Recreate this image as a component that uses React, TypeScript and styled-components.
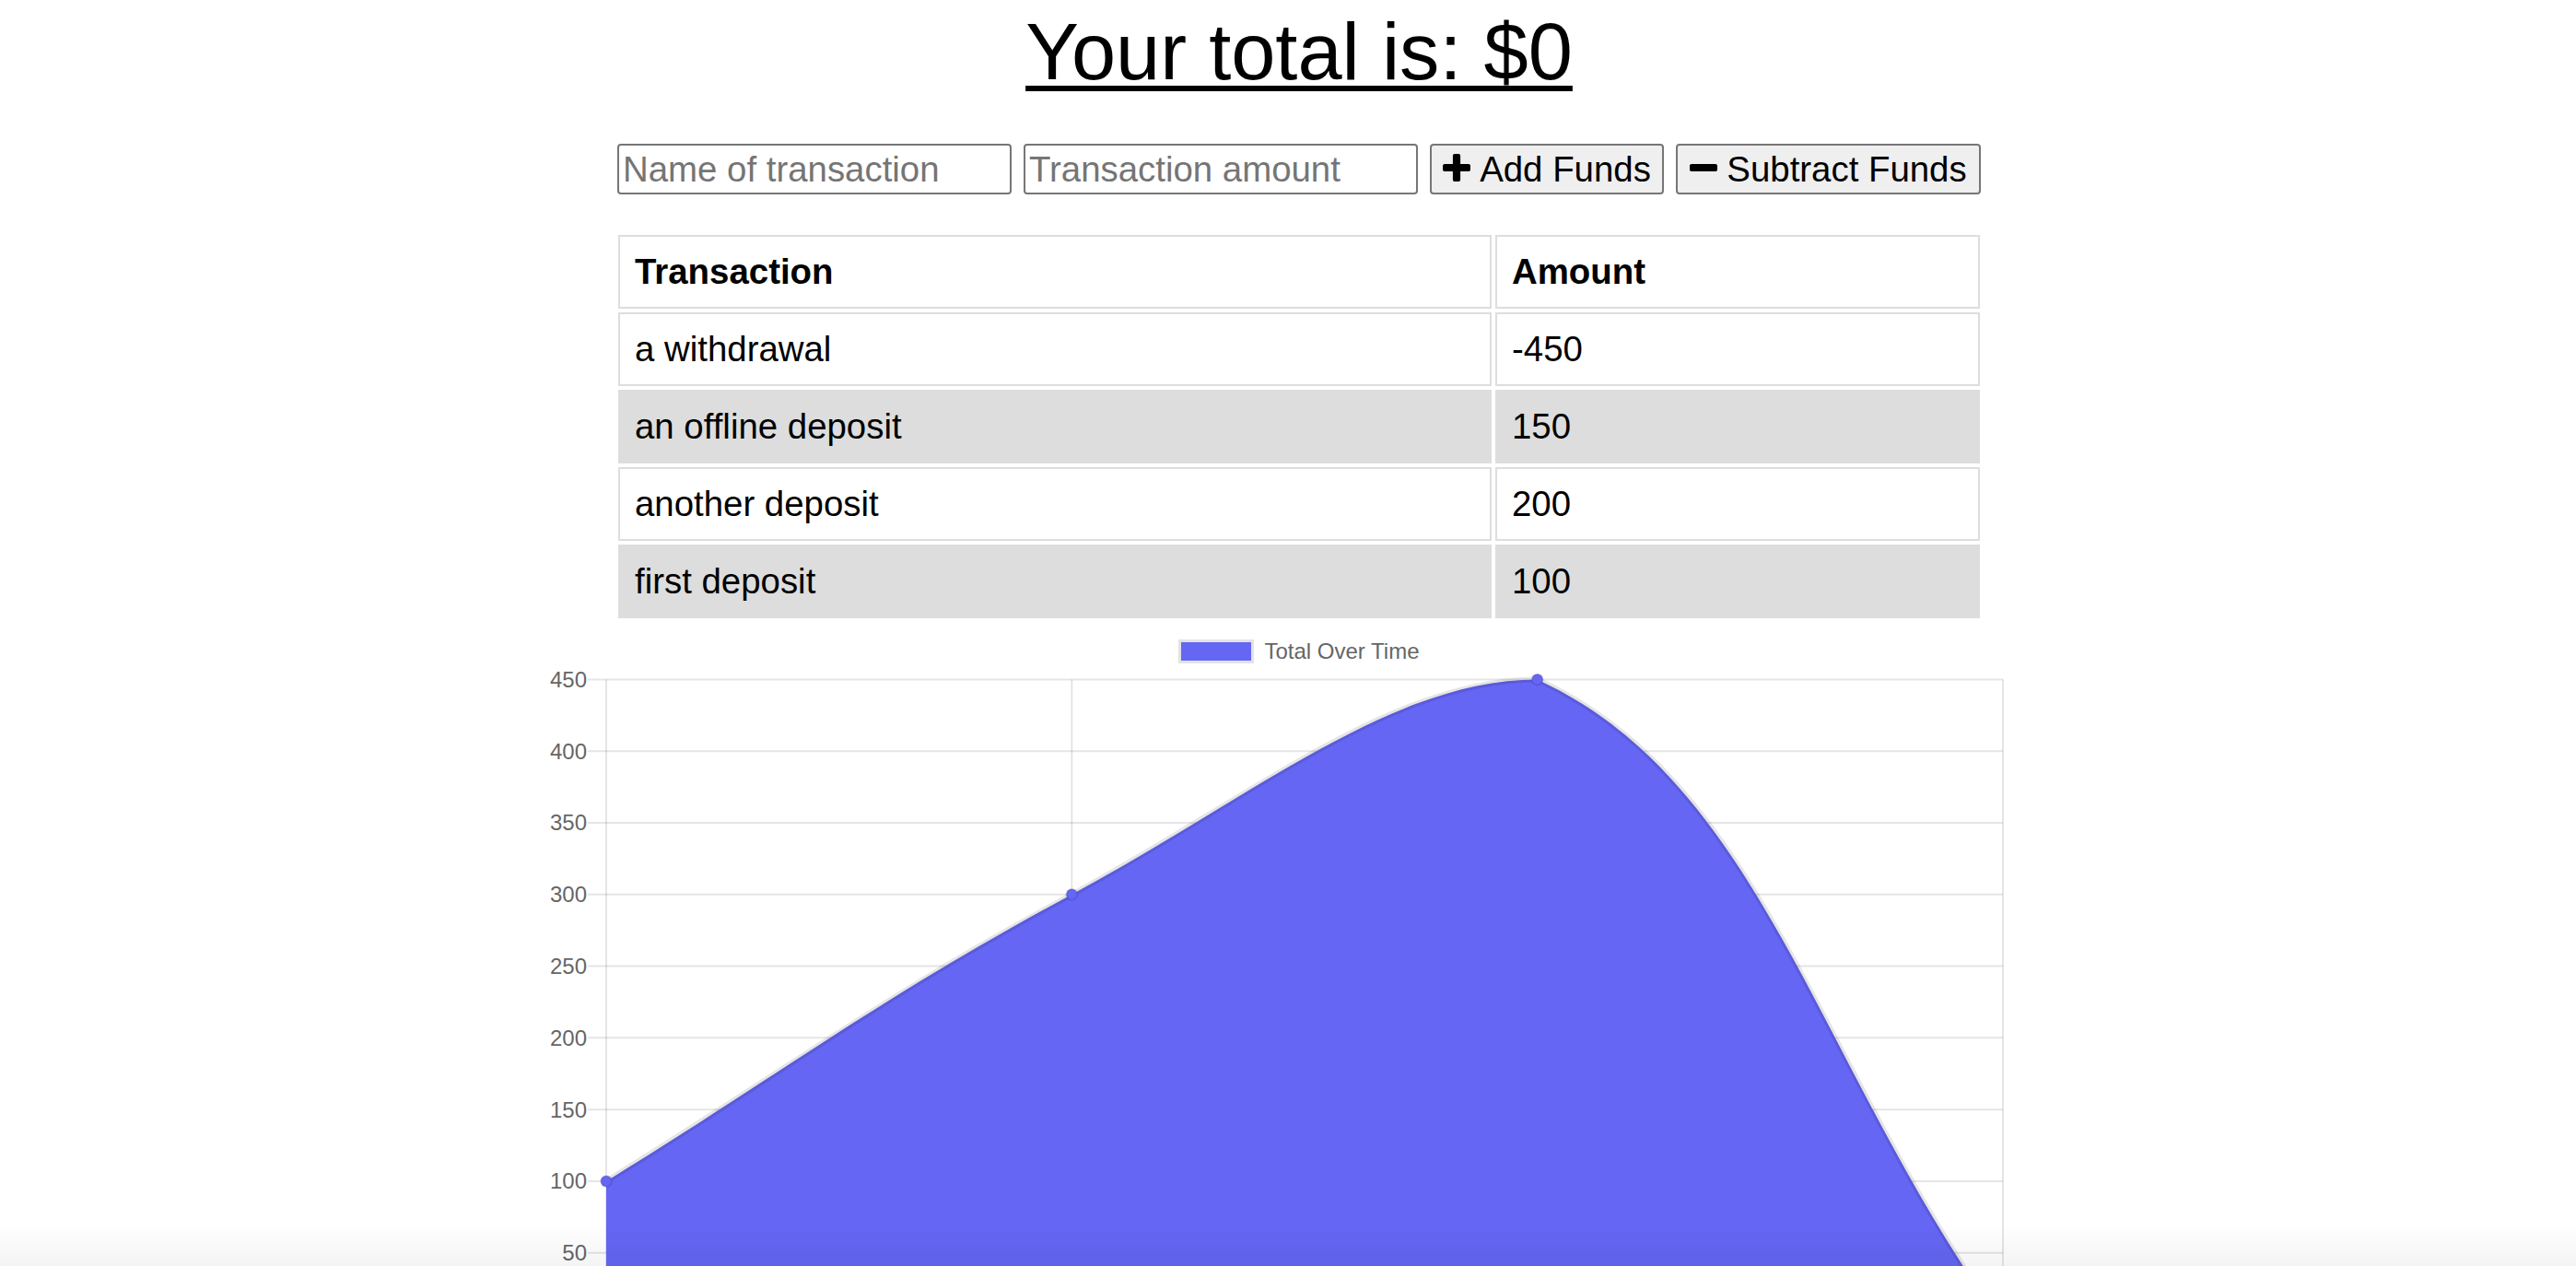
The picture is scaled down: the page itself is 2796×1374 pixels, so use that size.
import React from "react";
import styled, { createGlobalStyle } from "styled-components";

const GlobalStyle = createGlobalStyle`
  html, body {
    margin: 0;
    padding: 0;
    background: #ffffff;
    overflow: hidden;
  }
  body {
    font-family: "Liberation Sans", Arial, Helvetica, sans-serif;
    color: #000000;
  }
  * { box-sizing: border-box; }
`;

const Page = styled.main`
  padding-left: 24px;
  display: flex;
  flex-direction: column;
  align-items: center;
`;

const Title = styled.h1`
  margin: 9px 0 0;
  font-size: 86.6px;
  line-height: 95px;
  font-weight: 400;
  text-decoration: underline;
  text-decoration-thickness: 6px;
  text-underline-offset: 7px;
`;

const FormRow = styled.div`
  display: flex;
  gap: 13px;
  margin-top: 52px;
`;

const TextInput = styled.input`
  width: 428px;
  height: 55px;
  border: 2px solid #767676;
  border-radius: 4px;
  padding: 2px 4px;
  font-family: inherit;
  font-size: 38.4px;
  color: #000;
  background: #fff;
  outline: none;
  &::placeholder {
    color: #757575;
  }
`;

const ActionButton = styled.button<{ $width: number }>`
  width: ${(p) => p.$width}px;
  height: 55px;
  display: inline-flex;
  align-items: center;
  justify-content: center;
  gap: 10px;
  padding: 0;
  background: #efefef;
  border: 2px solid #767676;
  border-radius: 4px;
  font-family: inherit;
  font-size: 38.4px;
  color: #000;
`;

const IconSvg = styled.svg`
  width: 30px;
  height: 30px;
  margin-top: -4px;
  flex: none;
  fill: #000;
`;

const Table = styled.table`
  margin-top: 40px;
  width: 1486px;
  border-collapse: separate;
  border-spacing: 4px;
  table-layout: fixed;
  font-size: 38.4px;
`;

const Row = styled.tr`
  tbody &:nth-child(even) {
    background: #dddddd;
  }
`;

const HeadCell = styled.th<{ $width?: number }>`
  ${(p) => (p.$width ? `width: ${p.$width}px;` : "")}
  border: 2px solid #dddddd;
  padding: 16px;
  line-height: 44px;
  text-align: left;
  font-weight: 700;
`;

const Cell = styled.td`
  border: 2px solid #dddddd;
  padding: 16px;
  line-height: 44px;
  text-align: left;
`;

const ChartBlock = styled.section`
  width: 1680px;
  display: flex;
  flex-direction: column;
`;

const LegendRow = styled.div`
  display: flex;
  justify-content: center;
  align-items: center;
  gap: 11px;
  padding-top: 19px;
`;

const LegendSwatch = styled.span`
  width: 82px;
  height: 26px;
  background: #6566f4;
  border: 3px solid #e3e3e3;
`;

const LegendLabel = styled.span`
  font-size: 24px;
  line-height: 26px;
  color: #666666;
`;

const ChartSvg = styled.svg`
  display: block;
  width: 1680px;
  height: 654px;
`;

const BottomShade = styled.div`
  position: fixed;
  left: 0;
  right: 0;
  bottom: 0;
  height: 46px;
  pointer-events: none;
  background: linear-gradient(to bottom, rgba(0, 0, 0, 0), rgba(0, 0, 0, 0.045));
`;

const PLUS =
  "M1408 800v192q0 40-28 68t-68 28h-416v416q0 40-28 68t-68 28h-192q-40 0-68-28t-28-68v-416h-416q-40 0-68-28t-28-68v-192q0-40 28-68t68-28h416v-416q0-40 28-68t68-28h192q40 0 68 28t28 68v416h416q40 0 68 28t28 68z";
const MINUS =
  "M1408 800v192q0 40-28 68t-68 28h-1216q-40 0-68-28t-28-68v-192q0-40 28-68t68-28h1216q40 0 68 28t28 68z";

const Icon = ({ d }: { d: string }) => (
  <IconSvg viewBox="0 192 1408 1408" aria-hidden="true">
    <path d={d} />
  </IconSvg>
);

const transactions = [
  { name: "a withdrawal", amount: "-450" },
  { name: "an offline deposit", amount: "150" },
  { name: "another deposit", amount: "200" },
  { name: "first deposit", amount: "100" },
];

const totals = [100, 300, 450, 0];

const VIEW_H = 654;
const AREA = { left: 88, right: 1604, top: 17.4 };
const MAX = 450;
const UNIT = 1.5558;
const yOf = (v: number) => AREA.top + (MAX - v) * UNIT;
const BOTTOM = yOf(0);
const GRID = "rgba(0,0,0,0.1)";
const FILL = "#6566f4";

type Pt = { x: number; y: number };

function buildPath(values: number[]) {
  const step = (AREA.right - AREA.left) / (values.length - 1);
  const pts: Pt[] = values.map((v, i) => ({ x: AREA.left + i * step, y: yOf(v) }));
  const cap = (v: number, lo: number, hi: number) => Math.max(lo, Math.min(hi, v));
  const cps = pts.map((p, i) => {
    const prev = pts[i - 1] ?? p;
    const next = pts[i + 1] ?? p;
    const d01 = Math.hypot(p.x - prev.x, p.y - prev.y);
    const d12 = Math.hypot(next.x - p.x, next.y - p.y);
    let s01 = d01 / (d01 + d12);
    let s12 = d12 / (d01 + d12);
    if (isNaN(s01)) s01 = 0;
    if (isNaN(s12)) s12 = 0;
    const fa = 0.4 * s01;
    const fb = 0.4 * s12;
    return {
      prev: {
        x: cap(p.x - fa * (next.x - prev.x), AREA.left, AREA.right),
        y: cap(p.y - fa * (next.y - prev.y), AREA.top, BOTTOM),
      },
      next: {
        x: cap(p.x + fb * (next.x - prev.x), AREA.left, AREA.right),
        y: cap(p.y + fb * (next.y - prev.y), AREA.top, BOTTOM),
      },
    };
  });
  let line = `M${pts[0].x},${pts[0].y}`;
  for (let i = 1; i < pts.length; i++) {
    const a = cps[i - 1].next;
    const b = cps[i].prev;
    line += ` C${a.x},${a.y} ${b.x},${b.y} ${pts[i].x},${pts[i].y}`;
  }
  const area = `${line} L${AREA.right},${BOTTOM} L${AREA.left},${BOTTOM} Z`;
  return { pts, line, area, step };
}

const TotalChart = () => {
  const { pts, line, area, step } = buildPath(totals);
  const ticks: number[] = [];
  for (let v = MAX; v >= 0; v -= 50) ticks.push(v);
  const visibleTicks = ticks.filter((v) => yOf(v) + 14 < VIEW_H);
  return (
    <ChartBlock>
      <LegendRow>
        <LegendSwatch />
        <LegendLabel>Total Over Time</LegendLabel>
      </LegendRow>
      <ChartSvg viewBox={`0 0 1680 ${VIEW_H}`}>
        {ticks.map((v) => (
          <line key={`h${v}`} x1={68} x2={AREA.right} y1={yOf(v)} y2={yOf(v)} stroke={GRID} strokeWidth={2} />
        ))}
        {totals.map((_, i) => (
          <line
            key={`v${i}`}
            x1={AREA.left + i * step}
            x2={AREA.left + i * step}
            y1={AREA.top}
            y2={BOTTOM + 20}
            stroke={GRID}
            strokeWidth={2}
          />
        ))}
        {visibleTicks.map((v) => (
          <text
            key={`t${v}`}
            x={67}
            y={yOf(v)}
            textAnchor="end"
            dominantBaseline="central"
            fontSize={24}
            fill="#666666"
            fontFamily='"Liberation Sans", Arial, sans-serif'
          >
            {v}
          </text>
        ))}
        <path d={area} fill={FILL} />
        <path d={line} fill="none" stroke="rgba(0,0,0,0.1)" strokeWidth={6} />
        {pts.map((p, i) => (
          <circle key={`p${i}`} cx={p.x} cy={p.y} r={6} fill={FILL} stroke="rgba(0,0,0,0.1)" strokeWidth={2} />
        ))}
      </ChartSvg>
    </ChartBlock>
  );
};

export default function App() {
  return (
    <>
      <GlobalStyle />
      <Page>
        <Title>Your total is: $0</Title>
        <FormRow>
          <TextInput type="text" placeholder="Name of transaction" />
          <TextInput type="number" placeholder="Transaction amount" />
          <ActionButton $width={254}>
            <Icon d={PLUS} />
            Add Funds
          </ActionButton>
          <ActionButton $width={331}>
            <Icon d={MINUS} />
            Subtract Funds
          </ActionButton>
        </FormRow>
        <Table>
          <thead>
            <tr>
              <HeadCell $width={948}>Transaction</HeadCell>
              <HeadCell>Amount</HeadCell>
            </tr>
          </thead>
          <tbody>
            {transactions.map((t) => (
              <Row key={t.name}>
                <Cell>{t.name}</Cell>
                <Cell>{t.amount}</Cell>
              </Row>
            ))}
          </tbody>
        </Table>
        <TotalChart />
      </Page>
      <BottomShade />
    </>
  );
}
